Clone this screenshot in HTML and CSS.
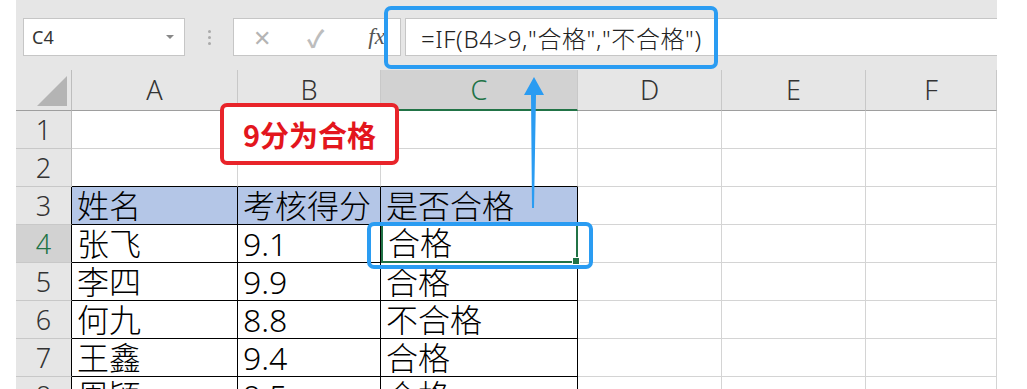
FILE: index.html
```html
<!DOCTYPE html>
<html lang="zh-CN">
<head>
    <meta charset="UTF-8">
    <title>Excel</title>
    <link rel="stylesheet" href="styles.css">
</head>
<body>
    <div class="app">
        <div class="toolbar">
            <div class="name-box">
                <span>C4</span>
                <span class="caret"></span>
            </div>
            <div class="dots"><i></i><i></i><i></i></div>
            <div class="fx-buttons">
                <span class="btn-x">✕</span>
                <span class="btn-ok">✓</span>
                <span class="btn-fx">fx</span>
            </div>
            <div class="formula">=IF(B4&gt;9,"合格","不合格")</div>
        </div>

        <div class="sheet">
            <div class="corner"><span class="tri"></span></div>
            <div class="col-head">A</div>
            <div class="col-head">B</div>
            <div class="col-head active">C</div>
            <div class="col-head">D</div>
            <div class="col-head">E</div>
            <div class="col-head">F</div>

            <div class="row-head">1</div>
            <div class="cell"></div><div class="cell"></div><div class="cell"></div>
            <div class="cell"></div><div class="cell"></div><div class="cell"></div>

            <div class="row-head">2</div>
            <div class="cell tb"></div><div class="cell tb"></div><div class="cell tb"></div>
            <div class="cell"></div><div class="cell"></div><div class="cell"></div>

            <div class="row-head t">3</div>
            <div class="cell t th">姓名</div><div class="cell t th">考核得分</div><div class="cell t th">是否合格</div>
            <div class="cell"></div><div class="cell"></div><div class="cell"></div>

            <div class="row-head t active">4</div>
            <div class="cell t">张飞</div><div class="cell t">9.1</div><div class="cell t selected">合格</div>
            <div class="cell"></div><div class="cell"></div><div class="cell"></div>

            <div class="row-head t">5</div>
            <div class="cell t">李四</div><div class="cell t">9.9</div><div class="cell t">合格</div>
            <div class="cell"></div><div class="cell"></div><div class="cell"></div>

            <div class="row-head t">6</div>
            <div class="cell t">何九</div><div class="cell t">8.8</div><div class="cell t">不合格</div>
            <div class="cell"></div><div class="cell"></div><div class="cell"></div>

            <div class="row-head t">7</div>
            <div class="cell t">王鑫</div><div class="cell t">9.4</div><div class="cell t">合格</div>
            <div class="cell"></div><div class="cell"></div><div class="cell"></div>

            <div class="row-head t">8</div>
            <div class="cell t">周颖</div><div class="cell t">9.5</div><div class="cell t">合格</div>
            <div class="cell"></div><div class="cell"></div><div class="cell"></div>
        </div>
    </div>

    <div class="note">9分为合格</div>
    <div class="mark mark-formula"></div>
    <div class="mark mark-cell"></div>
    <svg class="arrow" width="30" height="140" viewBox="0 0 30 140">
        <polygon points="12,1 2,19 9,19 10,132 12,132 14,19 22,19" fill="#2a9cf2"/>
    </svg>
</body>
</html>
```

FILE: styles.css
```css
html, body {
    margin: 0;
    height: 389px;
    overflow: hidden;
    background: #fff;
}
body {
    position: relative;
    font-family: "Noto Sans", "Noto Sans CJK SC", sans-serif;
    color: #000;
}
.app {
    margin-left: 16px;
    width: 981px;
    background: #e6e6e6;
}

/* formula bar */
.toolbar {
    display: flex;
    align-items: stretch;
    height: 38px;
    padding-top: 18px;
    padding-bottom: 14px;
}
.name-box {
    box-sizing: border-box;
    width: 162px;
    margin-left: 7px;
    background: #fff;
    border: 1px solid #c6c6c6;
    display: flex;
    align-items: center;
    justify-content: space-between;
    padding: 0 10px 0 8px;
    font-size: 18px;
    color: #333;
}
.caret {
    width: 0;
    height: 0;
    border-left: 4px solid transparent;
    border-right: 4px solid transparent;
    border-top: 4px solid #888;
}
.dots {
    width: 48px;
    display: flex;
    flex-direction: column;
    align-items: center;
    justify-content: center;
    gap: 3px;
}
.dots i {
    width: 3px;
    height: 3px;
    background: #aaa;
    border-radius: 50%;
}
.fx-buttons {
    box-sizing: border-box;
    width: 168px;
    background: #fff;
    border: 1px solid #c6c6c6;
    display: flex;
    align-items: center;
    color: #b4b4b4;
}
.btn-x {
    margin-left: 19px;
    font-size: 22px;
}
.btn-ok {
    margin-left: 36px;
    font-size: 24px;
    font-weight: bold;
    color: #bdbdbd;
}
.btn-fx {
    margin-left: 44px;
    font-family: "Liberation Serif", serif;
    font-style: italic;
    color: #555;
    font-size: 23px;
}
.formula {
    flex: 1;
    margin-left: 4px;
    background: #fff;
    border: 1px solid #c6c6c6;
    border-right: 0;
    display: flex;
    align-items: center;
    padding-left: 15px;
    font-size: 24px;
    letter-spacing: 0.6px;
    font-weight: 300;
    color: #222;
}

/* grid */
.sheet {
    display: grid;
    grid-template-columns: 56px 166px 143px 197px 144px 144px 131px;
    grid-template-rows: 41px repeat(8, 38px);
    margin-left: -16px;
    padding-left: 16px;
    background: #fff;
    width: 981px;
}
.sheet > div {
    box-sizing: border-box;
}
.corner {
    background: #e6e6e6;
    border-right: 1px solid #bdbdbd;
    border-bottom: 1px solid #9e9e9e;
    position: relative;
}
.tri {
    position: absolute;
    right: 4px;
    bottom: 4px;
    width: 0;
    height: 0;
    border-left: 30px solid transparent;
    border-bottom: 30px solid #b4b4b4;
}
.col-head {
    background: #e6e6e6;
    border-right: 1px solid #c8c8c8;
    border-bottom: 1px solid #9e9e9e;
    text-align: center;
    font-size: 27px;
    font-weight: 300;
    line-height: 40px;
    color: #333;
}
.col-head.active {
    background: #d2d2d2;
    color: #217346;
    border-bottom: 2px solid #217346;
}
.row-head {
    background: #e6e6e6;
    border-right: 1px solid #bdbdbd;
    border-bottom: 1px solid #c8c8c8;
    text-align: center;
    font-size: 27px;
    font-weight: 300;
    line-height: 37px;
    color: #333;
}
.row-head.t {
    border-right-color: #000;
}
.row-head.active {
    background: #d2d2d2;
    color: #217346;
}
.cell {
    border-right: 1px solid #d4d4d4;
    border-bottom: 1px solid #d4d4d4;
    font-size: 32px;
    font-weight: 300;
    line-height: 37px;
    padding-left: 5px;
    white-space: nowrap;
}
.cell.tb {
    border-bottom-color: #000;
}
.cell.t {
    border-right-color: #000;
    border-bottom-color: #000;
}
.cell.th {
    background: #b4c6e7;
}
.cell.selected {
    position: relative;
    border: 2px solid #217346;
    border-top: 0;
    line-height: 36px;
}
.cell.selected::after {
    content: "";
    position: absolute;
    right: -4px;
    bottom: -4px;
    width: 6px;
    height: 6px;
    background: #217346;
    border: 1px solid #fff;
}

/* annotations */
.note {
    position: absolute;
    left: 220px;
    top: 103px;
    box-sizing: border-box;
    width: 179px;
    height: 62px;
    border: 4px solid #e8242a;
    border-radius: 7px;
    background: #fff;
    color: #e3161d;
    font-weight: bold;
    font-size: 29px;
    line-height: 54px;
    text-align: center;
    font-family: "Noto Sans CJK SC", sans-serif;
}
.mark {
    position: absolute;
    box-sizing: border-box;
    border: 4px solid #2a9cf2;
    border-radius: 7px;
}
.mark-formula {
    left: 384px;
    top: 6px;
    width: 334px;
    height: 63px;
}
.mark-cell {
    left: 367px;
    top: 222px;
    width: 226px;
    height: 47px;
}
.arrow {
    position: absolute;
    left: 522px;
    top: 76px;
}
```
